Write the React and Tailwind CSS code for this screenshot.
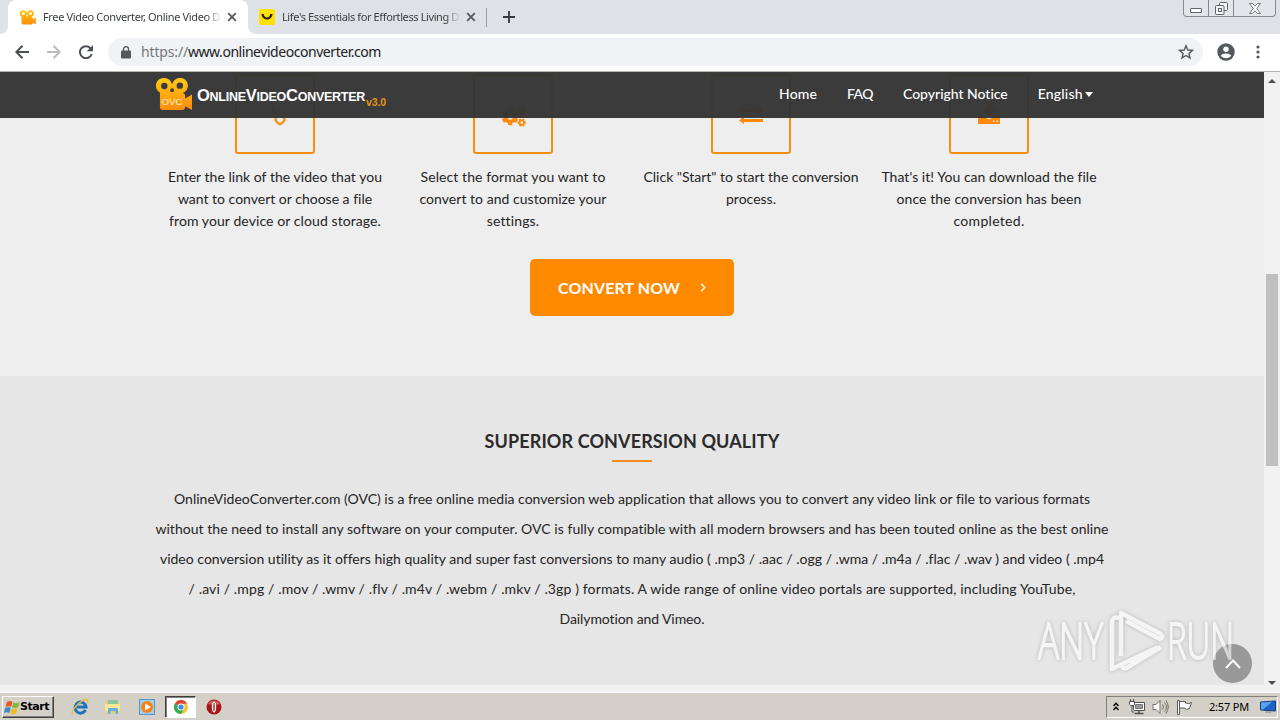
import React, { useLayoutEffect, useRef } from "react";
import { FaCogs } from "react-icons/fa";

// Single line of text tracked out so that it fills the given width.
function Fit({ w, className = "", children }) {
  const ref = useRef(null);
  useLayoutEffect(() => {
    const el = ref.current;
    el.style.letterSpacing = "0px";
    const natural = el.getBoundingClientRect().width;
    const gap = (w - natural) / el.textContent.length;
    el.style.letterSpacing = `${gap}px`;
  }, [w, children]);
  return (
    <span ref={ref} className={`inline-block whitespace-pre ${className}`}>
      {children}
    </span>
  );
}

function Camera({ className, label }) {
  return (
    <svg viewBox="0 0 37 34" className={className}>
      <defs>
        <linearGradient id="cam" x1="0" y1="0" x2="0" y2="1">
          <stop offset="0" stopColor="#ffc814" />
          <stop offset="1" stopColor="#ff8c0a" />
        </linearGradient>
      </defs>
      <path
        fill="url(#cam)"
        fillRule="evenodd"
        d="M8 0a8 8 0 0 1 7.700 6h.8A8 8 0 1 1 27 15.400q2.500.600 2.500 3V21l7-4v16l-7-4v1q0 3-3 3H6.500q-3 0-3-3V15A8 8 0 0 1 8 0ZM8 5a3.300 3.300 0 1 0 0 6.600A3.300 3.300 0 0 0 8 5ZM24 4.600a3.300 3.300 0 1 0 0 6.600 3.300 3.300 0 0 0 0-6.600ZM16 10.500a2 2 0 1 0 0 4 2 2 0 0 0 0-4Z"
      />
      {label && (
        <text x="16" y="28" textAnchor="middle" fill="#fff3d0" className="font-['Liberation_Sans'] text-[10px]">
          OVC
        </text>
      )}
    </svg>
  );
}

function Close() {
  return (
    <svg viewBox="0 0 10 10" className="size-[10px] shrink-0">
      <path d="M1.200 1.200l7.600 7.600M8.800 1.200L1.200 8.800" stroke="#55585c" strokeWidth="1.800" />
    </svg>
  );
}

function TabStrip() {
  return (
    <div className="flex h-[34px] bg-[#dee1e6] font-['Noto_Sans',sans-serif] text-[11px] text-[#3c4043]">
      <div className="flex h-full w-2 items-end bg-white">
        <div className="size-full rounded-br-lg bg-[#dee1e6]" />
      </div>
      <div className="flex h-full w-[240px] items-center rounded-t-lg bg-white pl-3">
        <Camera className="h-[15px] w-4" />
        <div className="ml-[7px] w-[178px] overflow-hidden [mask-image:linear-gradient(to_right,#000_164px,transparent_178px)]">
          <Fit w={177}>Free Video Converter, Online Video D</Fit>
        </div>
        <div className="ml-[6px] flex"><Close /></div>
      </div>
      <div className="h-full w-2 bg-white">
        <div className="size-full rounded-bl-lg bg-[#dee1e6]" />
      </div>
      <div className="flex items-center pl-[3px]">
        <svg viewBox="0 0 16 16" className="size-4">
          <rect width="16" height="16" rx="2" fill="#ffe000" />
          <path d="M2.500 5h2.200c.5 4.500 6 4.500 6.600 0h2.200c-.5 7.300-10.500 7.300-11 0Z" fill="#282100" />
        </svg>
        <div className="ml-[7px] w-[178px] overflow-hidden [mask-image:linear-gradient(to_right,#000_164px,transparent_178px)]">
          <Fit w={177}>Life's Essentials for Effortless Living D</Fit>
        </div>
        <div className="ml-[6px] flex"><Close /></div>
        <div className="ml-[10px] h-[19px] w-px bg-[#9a9da2]" />
        <svg viewBox="0 0 12 12" className="ml-4 size-3">
          <path d="M6 0v12M0 6h12" stroke="#35383c" strokeWidth="1.800" />
        </svg>
      </div>
      <div className="mr-[4px] ml-auto flex h-[17px] w-[93px] rounded-b-[4px] border border-t-0 border-[#858992] bg-[#e3e5ea]">
        <div className="flex w-[25px] items-end justify-center border-r border-[#858992] pb-[3px]">
          <div className="h-[5px] w-3 rounded-[1px] border border-[#64676d] bg-white" />
        </div>
        <div className="flex w-[25px] items-center justify-center border-r border-[#858992]">
          <svg viewBox="0 0 13 13" className="size-[13px]" fill="#f4f5f7" stroke="#5d6066">
            <rect x="4.500" y=".5" width="8" height="8" rx="1" />
            <rect x=".5" y="3.500" width="8.500" height="9" rx="1" />
            <rect x="3.500" y="6.500" width="3" height="3" />
          </svg>
        </div>
        <div className="flex flex-1 items-center justify-center">
          <svg viewBox="0 0 12 11" className="h-[11px] w-3">
            <path
              d="M.5.5h3L6 3.200 8.500.5h3L7.800 5.500l3.700 5h-3L6 7.800l-2.500 2.700h-3l3.700-5Z"
              fill="#fff"
              stroke="#66696f"
              strokeWidth=".9"
            />
          </svg>
        </div>
      </div>
    </div>
  );
}

function Toolbar() {
  return (
    <div className="flex h-[38px] items-center border-b border-[#b4b7b4] bg-white pb-px pl-[15px]">
      <svg viewBox="0 0 14 14" className="size-[14px]" fill="none" stroke="#4c5054" strokeWidth="2">
        <path d="M7.500.8L1.300 7l6.200 6.200M1.500 7H14" />
      </svg>
      <svg viewBox="0 0 14 14" className="ml-[18px] size-[14px]" fill="none" stroke="#babcbe" strokeWidth="2">
        <path d="M6.500.8L12.700 7l-6.200 6.200M12.500 7H0" />
      </svg>
      <svg viewBox="0 0 14 14" className="ml-[18px] size-[14px]">
        <path d="M11.800 3.600A6 6 0 1 0 12.700 9" fill="none" stroke="#4c5054" strokeWidth="2" />
        <path d="M14 0v6.200H7.800Z" fill="#4c5054" />
      </svg>
      <div className="ml-[15px] flex h-7 w-[1095px] items-center rounded-full bg-[#f0f2f5] pr-[9px] pl-[13px]">
        <svg viewBox="0 0 10 13" className="h-[13px] w-[10px]">
          <rect y="4.500" width="10" height="8" rx="1" fill="#54575b" />
          <path d="M2.500 5V3.200a2.500 2.500 0 0 1 5 0V5" fill="none" stroke="#54575b" strokeWidth="1.300" />
        </svg>
        <div className="ml-[10px] font-['Noto_Sans',sans-serif] text-[14px] leading-5 text-[#202124]">
          <Fit w={47} className="text-[#74787c]">https://</Fit>
          <Fit w={193}>www.onlinevideoconverter.com</Fit>
        </div>
        <svg viewBox="0 0 16 16" className="ml-auto size-4">
          <path d="M8 1.800l1.800 4.200 4.700.4-3.600 3 1.100 4.600L8 11.500 4 14l1.100-4.600-3.600-3L6.200 6Z" fill="none" stroke="#55595d" strokeWidth="1.400" />
        </svg>
      </div>
      <svg viewBox="0 0 18 18" className="ml-[14px] size-[18px]">
        <circle cx="9" cy="9" r="8.700" fill="#54585c" />
        <circle cx="9" cy="6.300" r="2.700" fill="#fff" />
        <path d="M3.800 12.800c1.500-3 9-3 10.400 0-2 3.300-8.400 3.300-10.400 0Z" fill="#fff" />
      </svg>
      <svg viewBox="0 0 4 14" className="ml-[21px] h-[14px] w-1" fill="#54585c">
        <circle cx="2" cy="2" r="1.600" />
        <circle cx="2" cy="7" r="1.600" />
        <circle cx="2" cy="12" r="1.600" />
      </svg>
    </div>
  );
}

function SiteHeader() {
  return (
    <header className="absolute inset-x-0 top-0 flex h-[46px] items-start bg-[#333333]/96 pl-[156px] font-['Liberation_Sans',sans-serif] text-white">
      <Camera className="mt-[6px] h-[33px] w-[37px]" label />
      <div className="mt-[11px] ml-1 h-6 w-[170px] leading-6">
        <Fit w={168} className="font-bold">
          <span className="text-[16.500px]">O</span><span className="text-[12.500px]">NLINE</span>
          <span className="text-[16.500px]">V</span><span className="text-[12.500px]">IDEO</span>
          <span className="text-[16.500px]">C</span><span className="text-[12.500px]">ONVERTER</span>
        </Fit>
      </div>
      <div className="mt-[22px] -ml-px text-[10.500px] leading-4 font-bold text-[#e8920f]">
        <Fit w={20}>v3.0</Fit>
      </div>
      <nav className="mt-3 ml-[393px] flex gap-[30px] font-[Lato,sans-serif] text-[14px] leading-5 font-medium">
        <Fit w={38}>Home</Fit>
        <Fit w={26}>FAQ</Fit>
        <Fit w={105}>Copyright Notice</Fit>
        <div className="flex items-center">
          <Fit w={45}>English</Fit>
          <svg viewBox="0 0 8 5" className="ml-[2px] h-[5px] w-2" fill="#fff">
            <path d="M0 0h8L4 5Z" />
          </svg>
        </div>
      </nav>
    </header>
  );
}

const ORANGE = "#ff8a0c";

const steps = [
  {
    icon: (
      <svg viewBox="0 0 24 24" className="mt-[26px] ml-3 h-6 w-6" fill="none" stroke={ORANGE} strokeWidth="2.200">
        <path d="M4 4q-2 2 0 4l4 4M7 15q-1 2 0 4l2.500 2.500q1.500 1.500 3 0L15 19q1.500-2-1-4.500" />
      </svg>
    ),
    lines: [["Enter the link of the video that you", 214], ["want to convert or choose a file", 194], ["from your device or cloud storage.", 212]],
  },
  {
    icon: <FaCogs className="mt-[29px] ml-[2px] size-6 text-[#ff8a0c]" />,
    lines: [["Select the format you want to", 185], ["convert to and customize your", 187], ["settings.", 52]],
  },
  {
    icon: (
      <svg viewBox="0 0 24 18" className="mt-[30px] h-[18px] w-6" fill={ORANGE}>
        <path d="M0 3h19V0l5 4.500L19 9V6H0ZM24 13H5v-2.500L0 14.500l5 3.500v-2h19Z" />
      </svg>
    ),
    lines: [["Click \"Start\" to start the conversion", 215], ["process.", 50]],
  },
  {
    icon: (
      <svg viewBox="0 0 22 22" className="mt-[26px] h-[22px] w-[22px]" fill={ORANGE}>
        <path d="M8 0h6v7h5l-8 8-8-8h5Z" />
        <path
          fillRule="evenodd"
          d="M0 14h6.500l1.500 2q3 2 6 0l1.500-2H22v8H0ZM15 18.500v1.500h1.500v-1.500ZM18.500 18.500v1.500H20v-1.500Z"
        />
      </svg>
    ),
    lines: [["That's it! You can download the file", 215], ["once the conversion has been", 185], ["completed.", 71]],
  },
];

const paragraph = [
  ["OnlineVideoConverter.com (OVC) is a free online media conversion web application that allows you to convert any video link or file to various formats", 916],
  ["without the need to install any software on your computer. OVC is fully compatible with all modern browsers and has been touted online as the best online", 953],
  ["video conversion utility as it offers high quality and super fast conversions to many audio ( .mp3 / .aac / .ogg / .wma / .m4a / .flac / .wav ) and video ( .mp4", 944],
  ["/ .avi / .mpg / .mov / .wmv / .flv / .m4v / .webm / .mkv / .3gp ) formats. A wide range of online video portals are supported, including YouTube,", 887],
  ["Dailymotion and Vimeo.", 145],
];

function Watermark() {
  return (
    <svg
      viewBox="0 0 220 68"
      className="absolute top-[536px] left-[1036px] h-[68px] w-[220px] overflow-visible font-['Open_Sans',sans-serif] text-[50px] font-light opacity-60 drop-shadow-[0_0_2px_#999]"
      fill="none"
      stroke="#fff"
      strokeLinejoin="round"
      strokeWidth="4.500"
    >
      <text x="2" y="51" textLength="65" lengthAdjust="spacingAndGlyphs" fill="#fff" strokeWidth="1.800">ANY</text>
      <text x="131" y="51" textLength="67" lengthAdjust="spacingAndGlyphs" fill="#fff" strokeWidth="1.800">RUN</text>
      <path d="M83 10q-7-2-7 5v46l46-22M85 48V5l40 21q3 3-1 5L90 13M125 39L92 59q-5 3-6-1" />
    </svg>
  );
}

function Page() {
  return (
    <main className="relative h-[613px] w-[1264px] overflow-hidden font-[Lato,sans-serif] text-[#242424]">
      <section className="flex h-[304px] flex-col items-center bg-[#eeeeee] pt-[2px]">
        <div className="grid w-[952px] grid-cols-4">
          {steps.map((s, i) => (
            <div key={i} className="flex flex-col items-center">
              <div className="flex size-20 items-start justify-center rounded-[3px] border-2 border-[#f98d14]">{s.icon}</div>
              <div className="mt-3 flex flex-col items-center text-[14px] leading-[22px]">
                {s.lines.map(([t, w]) => (
                  <Fit key={t} w={w}>{t}</Fit>
                ))}
              </div>
            </div>
          ))}
        </div>
        <button className="mt-[27px] flex h-[57px] w-[204px] items-center rounded-[5px] bg-[#ff8a00] pl-7 text-[16px] font-bold text-white">
          <Fit w={122}>CONVERT NOW</Fit>
          <svg viewBox="0 0 6 10" className="ml-5 h-[9px] w-[6px]" fill="none" stroke="#fff" strokeWidth="1.500">
            <path d="M1 .8L5 5 1 9.200" />
          </svg>
        </button>
      </section>
      <section className="flex h-[309px] flex-col items-center bg-[#e6e6e6] pt-[52px]">
        <h2 className="text-[18px] leading-[26px] font-bold text-[#2b2b2b]">
          <Fit w={295}>SUPERIOR CONVERSION QUALITY</Fit>
        </h2>
        <div className="mt-[6px] h-[2px] w-10 bg-[#f58c1c]" />
        <div className="mt-[22px] flex flex-col items-center text-[14px] leading-[30px]">
          {paragraph.map(([t, w]) => (
            <Fit key={t} w={w}>{t}</Fit>
          ))}
        </div>
      </section>
      <SiteHeader />
      <div className="absolute top-[572px] left-[1213px] flex size-[39px] items-center justify-center rounded-full bg-[#999999]">
        <svg viewBox="0 0 16 10" className="h-[10px] w-4" fill="none" stroke="#fff" strokeWidth="2">
          <path d="M1 9l7-7.500L15 9" />
        </svg>
      </div>
      <Watermark />
    </main>
  );
}

function Scrollbar() {
  return (
    <div className="flex h-[620px] w-4 flex-col items-center bg-[#f1f1f1]">
      <svg viewBox="0 0 8 4" className="mt-[7px] h-1 w-2" fill="#505050">
        <path d="M4 0l4 4H0Z" />
      </svg>
      <div className="mt-[191px] h-[192px] w-3 bg-[#c0c0c0]" />
      <svg viewBox="0 0 8 4" className="mt-[215px] h-1 w-2" fill="#505050">
        <path d="M0 0h8L4 4Z" />
      </svg>
    </div>
  );
}

function Taskbar() {
  return (
    <div className="flex h-7 items-center border-t border-white bg-[#d4d0c8] pt-px pl-[2px] text-black">
      <div className="flex h-[22px] w-[52px] items-center border border-t-white border-r-[#404040] border-b-[#404040] border-l-white pl-px shadow-[inset_-1px_-1px_0_#808080]">
        <svg viewBox="0 0 16 15" className="h-[15px] w-4">
          <path d="M3 2q3-2 5.500 0L7 7Q4.500 5.500 1.500 7Z" fill="#e8572a" />
          <path d="M9.300 2.500Q12 4 15.500 2L14 7.500Q11 9 8 7.500Z" fill="#84b840" />
          <path d="M1.200 8Q4 6.500 6.700 8l-1.500 5Q3 11.500 0 13Z" fill="#3b87d2" />
          <path d="M7.700 8.500Q11 10 13.700 8.500l-1.500 5Q9 15 6.200 13.500Z" fill="#f3ba25" />
        </svg>
        <span className="font-['DejaVu_Sans',sans-serif] text-[11px] font-bold">
          <Fit w={29}>Start</Fit>
        </span>
      </div>
      <svg viewBox="0 0 18 18" className="ml-[17px] size-[18px]">
        <path d="M14.500 12A5.500 5.500 0 1 1 15 9H6" fill="none" stroke="#1b74bd" strokeWidth="3" />
        <path d="M2 16.500C-2 14 10 1.500 15.500 1.500q2.500 0 .5 4" fill="none" stroke="#e9bd38" strokeWidth="1.300" />
      </svg>
      <svg viewBox="0 0 18 18" className="ml-[15px] size-[18px]">
        <path d="M2 3h5l1 2h8v10H2Z" fill="#e9ce69" />
        <path d="M4 2h10v4H4Z" fill="#8fc4a0" />
        <path d="M1 6h15v7H1Z" fill="#f8e894" />
        <path d="M4 16v-5q0-1 1-1h8q1 0 1 1v5h-2.500v-3h-5v3Z" fill="#68aee0" />
      </svg>
      <svg viewBox="0 0 16 16" className="ml-[17px] size-4">
        <rect x=".5" y=".5" width="15" height="15" fill="#a4cdea" stroke="#5696cc" />
        <circle cx="8" cy="8" r="6" fill="#f28417" />
        <path d="M6 4.500L12 8l-6 3.500Z" fill="#fff" />
      </svg>
      <div className="ml-[10px] flex h-[22px] w-[31px] items-center justify-center border border-t-[#404040] border-r-white border-b-white border-l-[#404040] bg-white shadow-[inset_1px_1px_0_#808080]">
        <svg viewBox="0 0 14 14" className="size-[14px]">
          <circle cx="7" cy="7" r="7" fill="#f4c62c" />
          <path d="M7 7L.9 3.500A7 7 0 0 1 13.100 3.500L7 4Z" fill="#de4536" />
          <path d="M7 7L.9 3.500A7 7 0 0 0 7 14l3-5.300Z" fill="#35a853" />
          <circle cx="7" cy="7" r="3.500" fill="#fff" />
          <circle cx="7" cy="7" r="2.600" fill="#4285e8" />
        </svg>
      </div>
      <svg viewBox="0 0 16 16" className="ml-[10px] size-4">
        <circle cx="8" cy="8" r="7.500" fill="#a8161a" />
        <path d="M2 5a7 7 0 0 1 12 0q-6 2-12 0Z" fill="#d55c5c" />
        <ellipse cx="8" cy="8" rx="2.200" ry="5.500" fill="#fff" />
        <ellipse cx="8" cy="8" rx=".8" ry="4.500" fill="#b83030" />
      </svg>
      <div className="mr-[2px] ml-auto flex h-[22px] w-[172px] items-center border border-t-[#808080] border-r-white border-b-white border-l-[#808080] pl-[6px]">
        <svg viewBox="0 0 6 9" className="mb-[2px] h-[9px] w-[6px]" fill="none" stroke="#000" strokeWidth="1.400">
          <path d="M.5 4L3 1.200 5.500 4M.5 8L3 5.200 5.500 8" />
        </svg>
        <svg viewBox="0 0 16 16" className="ml-[10px] size-4" stroke="#504e4a">
          <path d="M4.500 3.500h11v8h-11Z" fill="#fff" />
          <path d="M6.500 5.500h7v4h-7Z" fill="#999" stroke="#777" />
          <path d="M5.500 14.500h9M10 12v2" strokeWidth="1.500" />
          <path d="M.5 2.500h5v3l-1 1h-3l-1-1ZM1.500 0v2M4.500 0v2M3 7v6h2" fill="#fff" />
        </svg>
        <svg viewBox="0 0 17 16" className="ml-[7px] h-4 w-[17px]" fill="none" stroke="#706e69">
          <path d="M1 5.500h3l4-4v13l-4-4H1Z" fill="#fff" />
          <path d="M10.500 5.500q2 2.500 0 5M12.500 3.500q4 4.500 0 9M14 1.500q4.500 6.500 0 13" />
        </svg>
        <svg viewBox="0 0 16 16" className="ml-[7px] size-4" stroke="#5d5b56">
          <path d="M3.500 2.500h6v1.500q3 1.500 6-.5l-2 6q-3 1.500-5 0v-.5h-5Z" fill="#fff" />
          <path d="M1.500 1.500h2v14h-2Z" fill="#fff" />
        </svg>
        <span className="ml-[17px] font-['Noto_Sans',sans-serif] text-[11px]">
          <Fit w={40}>2:57 PM</Fit>
        </span>
        <svg viewBox="0 0 16 14" className="ml-[11px] h-[14px] w-4">
          <path d="M.5 2l15-1v10l-15-1Z" fill="#1b64c5" stroke="#173d78" />
          <path d="M1 2.500l11-.8L3 9.500H1Z" fill="#5aa2ed" />
          <path d="M5 13h6l1-2H6Z" fill="#a3a6ab" />
        </svg>
      </div>
    </div>
  );
}

export default function App() {
  return (
    <div className="flex h-[720px] w-[1280px] flex-col overflow-hidden">
      <TabStrip />
      <Toolbar />
      <div className="flex h-[620px] bg-[#f1f1f1]">
        <Page />
        <Scrollbar />
      </div>
      <Taskbar />
    </div>
  );
}
